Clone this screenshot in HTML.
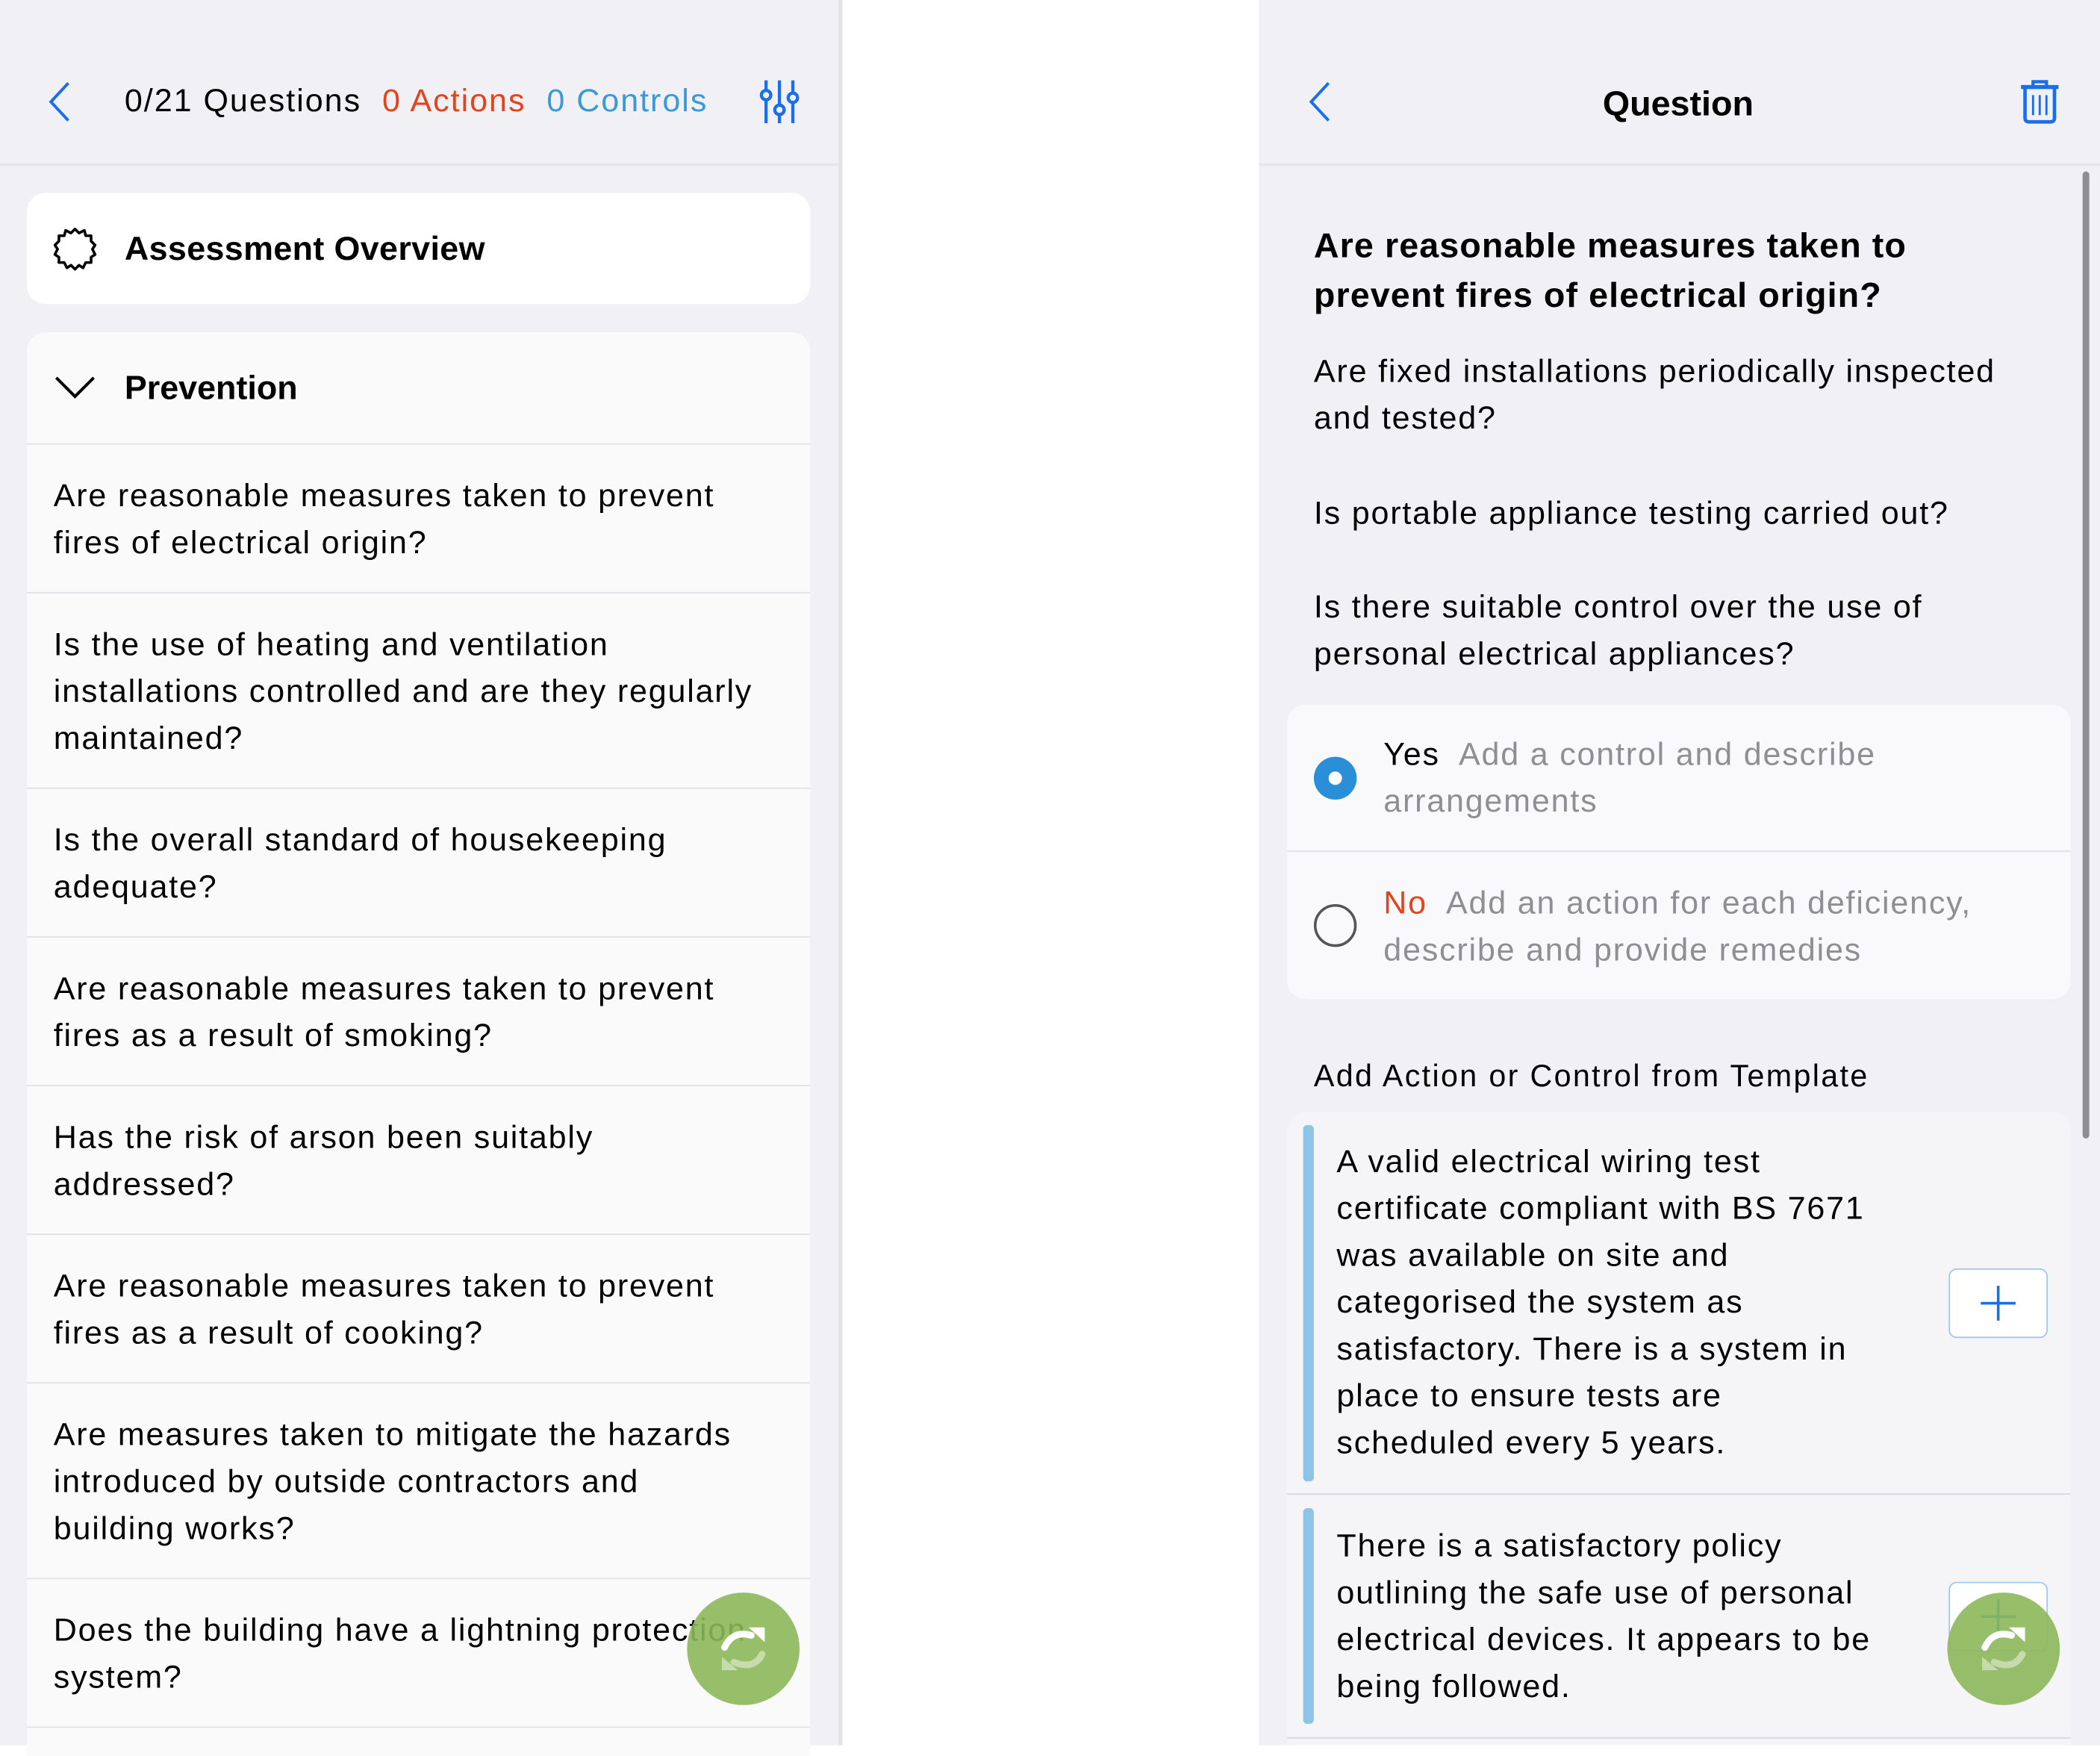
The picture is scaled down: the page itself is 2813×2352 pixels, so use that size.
<!DOCTYPE html>
<html><head><meta charset="utf-8"><style>
*{margin:0;padding:0;box-sizing:border-box}
html,body{width:2813px;height:2337px;overflow:hidden;background:#fff}
#w{position:absolute;left:0;top:0;width:1568px;height:1303px;transform:scale(1.79401);transform-origin:0 0;font-family:"Liberation Sans",sans-serif;color:#000}
.abs{position:absolute}
.gray{background:#f0f0f5}
.t{font-size:24px;line-height:35px;letter-spacing:1px;white-space:nowrap}
.row{position:absolute;left:20px;width:585px;background:#fafafa;border-top:1px solid #e2e2e6;padding:21px 20px 0 20px}
</style></head><body><div id="w">
<!-- left panel -->
<div class="abs gray" style="left:0;top:0;width:626px;height:1303px"></div>
<div class="abs" style="left:626px;top:0;width:3px;height:1303px;background:#e4e4e8"></div>
<div class="abs" style="left:0;top:122px;width:626px;height:2px;background:#e6e6ea"></div>
<svg class="abs" style="left:34px;top:60px" width="20" height="32"><path d="M17 2 L4 16 L17 30" stroke="#1a6fe8" stroke-width="2.2" fill="none"/></svg>
<div class="abs" style="left:93px;top:62px;font-size:24px;letter-spacing:1.1px;white-space:nowrap">0/21 Questions&nbsp; <span style="color:#e2451c">0 Actions</span>&nbsp; <span style="color:#3a9ad9">0 Controls</span></div>
<svg class="abs" style="left:566px;top:58px" width="32" height="36" stroke="#1a6fe8" stroke-width="2.4" fill="none"><path d="M6 2V34M16 2V34M26 2V34"/><circle cx="6" cy="13" r="3.5" fill="#f0f0f5"/><circle cx="16" cy="24" r="3.5" fill="#f0f0f5"/><circle cx="26" cy="15" r="3.5" fill="#f0f0f5"/></svg>
<div class="abs" style="left:20px;top:144px;width:585px;height:83px;background:#fff;border-radius:14px"></div>
<svg class="abs" style="left:38px;top:168px" width="36" height="36"><path d="M18 3 L21 6 L25 4 L26 8 L30 8 L30 12 L33 15 L31 18 L33 22 L30 24 L30 28 L26 28 L24 32 L21 30 L18 33 L15 30 L12 32 L10 28 L6 28 L6 24 L3 22 L5 18 L3 15 L6 12 L6 8 L10 8 L11 4 L15 6 Z" stroke="#000" stroke-width="2" fill="none" stroke-linejoin="round"/></svg>
<div class="abs" style="left:93px;top:172px;font-size:25px;font-weight:bold;letter-spacing:0.2px">Assessment Overview</div>
<div class="abs" style="left:20px;top:248px;width:585px;height:84px;background:#fafafa;border-radius:14px 14px 0 0"></div>
<svg class="abs" style="left:40px;top:279px" width="32" height="20"><path d="M2 3 L16 17 L30 3" stroke="#000" stroke-width="2.2" fill="none"/></svg>
<div class="abs" style="left:93px;top:276px;font-size:25px;font-weight:bold">Prevention</div>
<div class="row t" style="top:331px;height:111px">Are reasonable measures taken to prevent<br>fires of electrical origin?</div>
<div class="row t" style="top:442px;height:146px">Is the use of heating and ventilation<br>installations controlled and are they regularly<br>maintained?</div>
<div class="row t" style="top:588px;height:111px">Is the overall standard of housekeeping<br>adequate?</div>
<div class="row t" style="top:699px;height:111px">Are reasonable measures taken to prevent<br>fires as a result of smoking?</div>
<div class="row t" style="top:810px;height:111px">Has the risk of arson been suitably<br>addressed?</div>
<div class="row t" style="top:921px;height:111px">Are reasonable measures taken to prevent<br>fires as a result of cooking?</div>
<div class="row t" style="top:1032px;height:146px">Are measures taken to mitigate the hazards<br>introduced by outside contractors and<br>building works?</div>
<div class="row t" style="top:1178px;height:111px">Does the building have a lightning protection<br>system?</div>
<div class="row t" style="top:1289px;height:20px"></div>
<!-- right panel -->
<div class="abs gray" style="left:940px;top:0;width:628px;height:1303px"></div>
<div class="abs" style="left:940px;top:122px;width:628px;height:2px;background:#e6e6ea"></div>
<div class="abs" style="left:1555px;top:128px;width:5px;height:722px;background:#8e8e93;border-radius:3px"></div>
<svg class="abs" style="left:975px;top:60px" width="20" height="32"><path d="M17 2 L4 16 L17 30" stroke="#1a6fe8" stroke-width="2.2" fill="none"/></svg>
<div class="abs" style="left:1153px;top:62px;width:200px;text-align:center;font-size:26px;font-weight:bold">Question</div>
<svg class="abs" style="left:1507px;top:58px" width="32" height="36" stroke="#1a6fe8" fill="none"><path d="M2 7H30" stroke-width="3"/><path d="M11 6V3H21V6" stroke-width="2.4"/><path d="M5 8V30Q5 33 8 33H24Q27 33 27 30V8" stroke-width="2.6"/><path d="M11 13V28M16 13V28M21 13V28" stroke-width="1.6"/></svg>
<div class="abs" style="left:981px;top:165px;font-size:26px;font-weight:bold;line-height:37px;letter-spacing:0.6px;white-space:nowrap">Are reasonable measures taken to<br>prevent fires of electrical origin?</div>
<div class="abs t" style="left:981px;top:260px">Are fixed installations periodically inspected<br>and tested?</div>
<div class="abs t" style="left:981px;top:366px">Is portable appliance testing carried out?</div>
<div class="abs t" style="left:981px;top:436px">Is there suitable control over the use of<br>personal electrical appliances?</div>
<div class="abs" style="left:961px;top:526px;width:585px;height:220px;background:#f9f9fb;border-radius:14px"></div>
<div class="abs" style="left:961px;top:635px;width:585px;height:1px;background:#e2e2e6"></div>
<div class="abs" style="left:981px;top:565px;width:32px;height:32px;border-radius:50%;background:#2a8fd6"></div>
<div class="abs" style="left:992px;top:576px;width:10px;height:10px;border-radius:50%;background:#fff"></div>
<div class="abs" style="left:981px;top:675px;width:32px;height:32px;border-radius:50%;border:2px solid #555"></div>
<div class="abs t" style="left:1033px;top:546px"><span>Yes</span>&nbsp; <span style="color:#8e8e93">Add a control and describe<br>arrangements</span></div>
<div class="abs t" style="left:1033px;top:657px"><span style="color:#e2451c">No</span>&nbsp; <span style="color:#8e8e93">Add an action for each deficiency,<br>describe and provide remedies</span></div>
<div class="abs" style="left:981px;top:790px;font-size:23px;letter-spacing:1.3px;white-space:nowrap">Add Action or Control from Template</div>
<div class="abs" style="left:961px;top:830px;width:585px;height:473px;background:#f5f5f8;border-radius:14px 14px 0 0"></div>
<div class="abs" style="left:961px;top:1115px;width:585px;height:1px;background:#d8d8dc"></div>
<div class="abs" style="left:961px;top:1297px;width:585px;height:1px;background:#d8d8dc"></div>
<div class="abs" style="left:973px;top:840px;width:8px;height:266px;background:#8ec5e6;border-radius:3px"></div>
<div class="abs" style="left:973px;top:1126px;width:8px;height:161px;background:#8ec5e6;border-radius:3px"></div>
<div class="abs t" style="left:998px;top:850px">A valid electrical wiring test<br>certificate compliant with BS 7671<br>was available on site and<br>categorised the system as<br>satisfactory. There is a system in<br>place to ensure tests are<br>scheduled every 5 years.</div>
<div class="abs t" style="left:998px;top:1137px">There is a satisfactory policy<br>outlining the safe use of personal<br>electrical devices. It appears to be<br>being followed.</div>
<div class="abs" style="left:1455px;top:947px;width:74px;height:52px;background:#fff;border:1.5px solid #9ec8f2;border-radius:6px"></div>
<svg class="abs" style="left:1477px;top:958px" width="30" height="30"><path d="M15 2V28M2 15H28" stroke="#1a6fe8" stroke-width="2"/></svg>
<div class="abs" style="left:1455px;top:1181px;width:74px;height:52px;background:#fff;border:1.5px solid #9ec8f2;border-radius:6px"></div>
<svg class="abs" style="left:1477px;top:1192px" width="30" height="30"><path d="M15 2V28M2 15H28" stroke="#1a6fe8" stroke-width="2"/></svg>
<!-- FABs -->
<div class="abs" style="left:513px;top:1189px;width:84px;height:84px;border-radius:50%;background:rgba(140,184,90,0.9)"></div>
<svg class="abs" style="left:533px;top:1209px" width="44" height="44"><path d="M8 21Q14 8 28 12" stroke="#fff" stroke-width="5" fill="none" stroke-linecap="round"/><path d="M26 6L38 6L38 17Z" fill="#fff"/><path d="M36 26Q30 38 15 32" stroke="rgba(255,255,255,0.45)" stroke-width="5" fill="none" stroke-linecap="round"/><path d="M6 28L6 38L18 38Z" fill="rgba(255,255,255,0.45)"/></svg>
<div class="abs" style="left:1454px;top:1189px;width:84px;height:84px;border-radius:50%;background:rgba(140,184,90,0.9)"></div>
<svg class="abs" style="left:1474px;top:1209px" width="44" height="44"><path d="M8 21Q14 8 28 12" stroke="#fff" stroke-width="5" fill="none" stroke-linecap="round"/><path d="M26 6L38 6L38 17Z" fill="#fff"/><path d="M36 26Q30 38 15 32" stroke="rgba(255,255,255,0.45)" stroke-width="5" fill="none" stroke-linecap="round"/><path d="M6 28L6 38L18 38Z" fill="rgba(255,255,255,0.45)"/></svg>
</div></body></html>
